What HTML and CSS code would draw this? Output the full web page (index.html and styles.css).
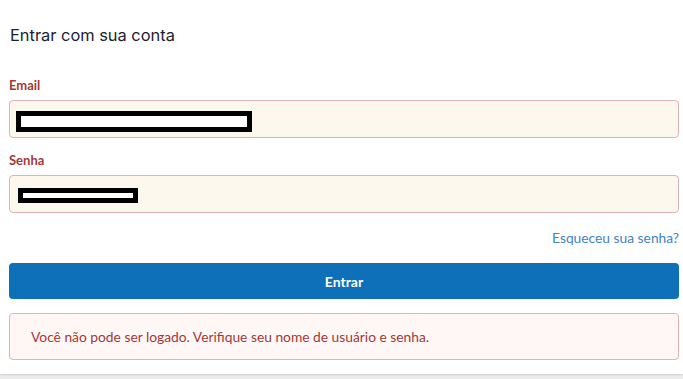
FILE: index.html
```html
<!DOCTYPE html>
<html lang="pt">
<head>
<meta charset="utf-8">
<title>Entrar</title>
<link rel="stylesheet" href="styles.css">
</head>
<body>
<div class="card">
  <h2 class="title">Entrar com sua conta</h2>
  <form class="form">
    <div class="field">
      <label class="label">Email</label>
      <div class="input"><span class="redact redact-email"></span></div>
    </div>
    <div class="field">
      <label class="label">Senha</label>
      <div class="input"><span class="redact redact-pass"></span></div>
    </div>
    <div class="forgot"><a href="#" class="link">Esqueceu sua senha?</a></div>
    <button type="button" class="btn">Entrar</button>
    <div class="error">Você não pode ser logado. Verifique seu nome de usuário e senha.</div>
  </form>
</div>
</body>
</html>
```
FILE: styles.css
```css
html, body {
  margin: 0;
  padding: 0;
}
body {
  background: #ececec;
  font-family: Lato, "Liberation Sans", sans-serif;
  height: 379px;
  overflow: hidden;
}
.card {
  background: #fff;
  padding: 25px 4px 14px 9px;
  box-shadow: 0 1px 2px rgba(0,0,0,0.12);
}
.title {
  margin: 0 0 0 1px;
  font-family: Inter, "Noto Sans", sans-serif;
  font-weight: 400;
  font-size: 16.4px;
  line-height: 20px;
  color: #1a2230;
}
.form {
  display: flex;
  flex-direction: column;
  margin-top: 32px;
}
.field {
  display: flex;
  flex-direction: column;
  gap: 7px;
  margin-bottom: 14px;
}
.field + .field {
  margin-bottom: 16px;
}
.label {
  font-weight: 700;
  font-size: 13px;
  line-height: 16px;
  color: #9f3a38;
}
.input {
  box-sizing: border-box;
  height: 38px;
  background: #fdf8ee;
  border: 1px solid #e0b4b4;
  border-radius: 4px;
  display: flex;
  align-items: center;
  padding-left: 6px;
}
.redact {
  box-sizing: border-box;
  display: block;
  background: #fff;
  border: 5px solid #000;
}
.redact-email {
  width: 236px;
  height: 21px;
  margin-top: 4px;
}
.redact-pass {
  width: 120px;
  height: 15px;
  margin-left: 2px;
  margin-top: 2px;
}
.forgot {
  display: flex;
  justify-content: flex-end;
  line-height: 18px;
  margin-bottom: 16px;
}
.link {
  color: #4183c4;
  text-decoration: none;
  font-size: 13.8px;
}
.btn {
  height: 36px;
  border: none;
  border-radius: 4px;
  background: #0e70b8;
  color: #fff;
  font-family: Lato, "Liberation Sans", sans-serif;
  font-weight: 700;
  font-size: 14px;
  padding: 0;
  margin: 0 0 14px;
}
.error {
  box-sizing: border-box;
  height: 47px;
  background: #fff6f6;
  border: 1px solid #e0b4b4;
  border-radius: 4px;
  color: #9f3a38;
  font-size: 13.8px;
  display: flex;
  align-items: center;
  padding-left: 21px;
}
```
